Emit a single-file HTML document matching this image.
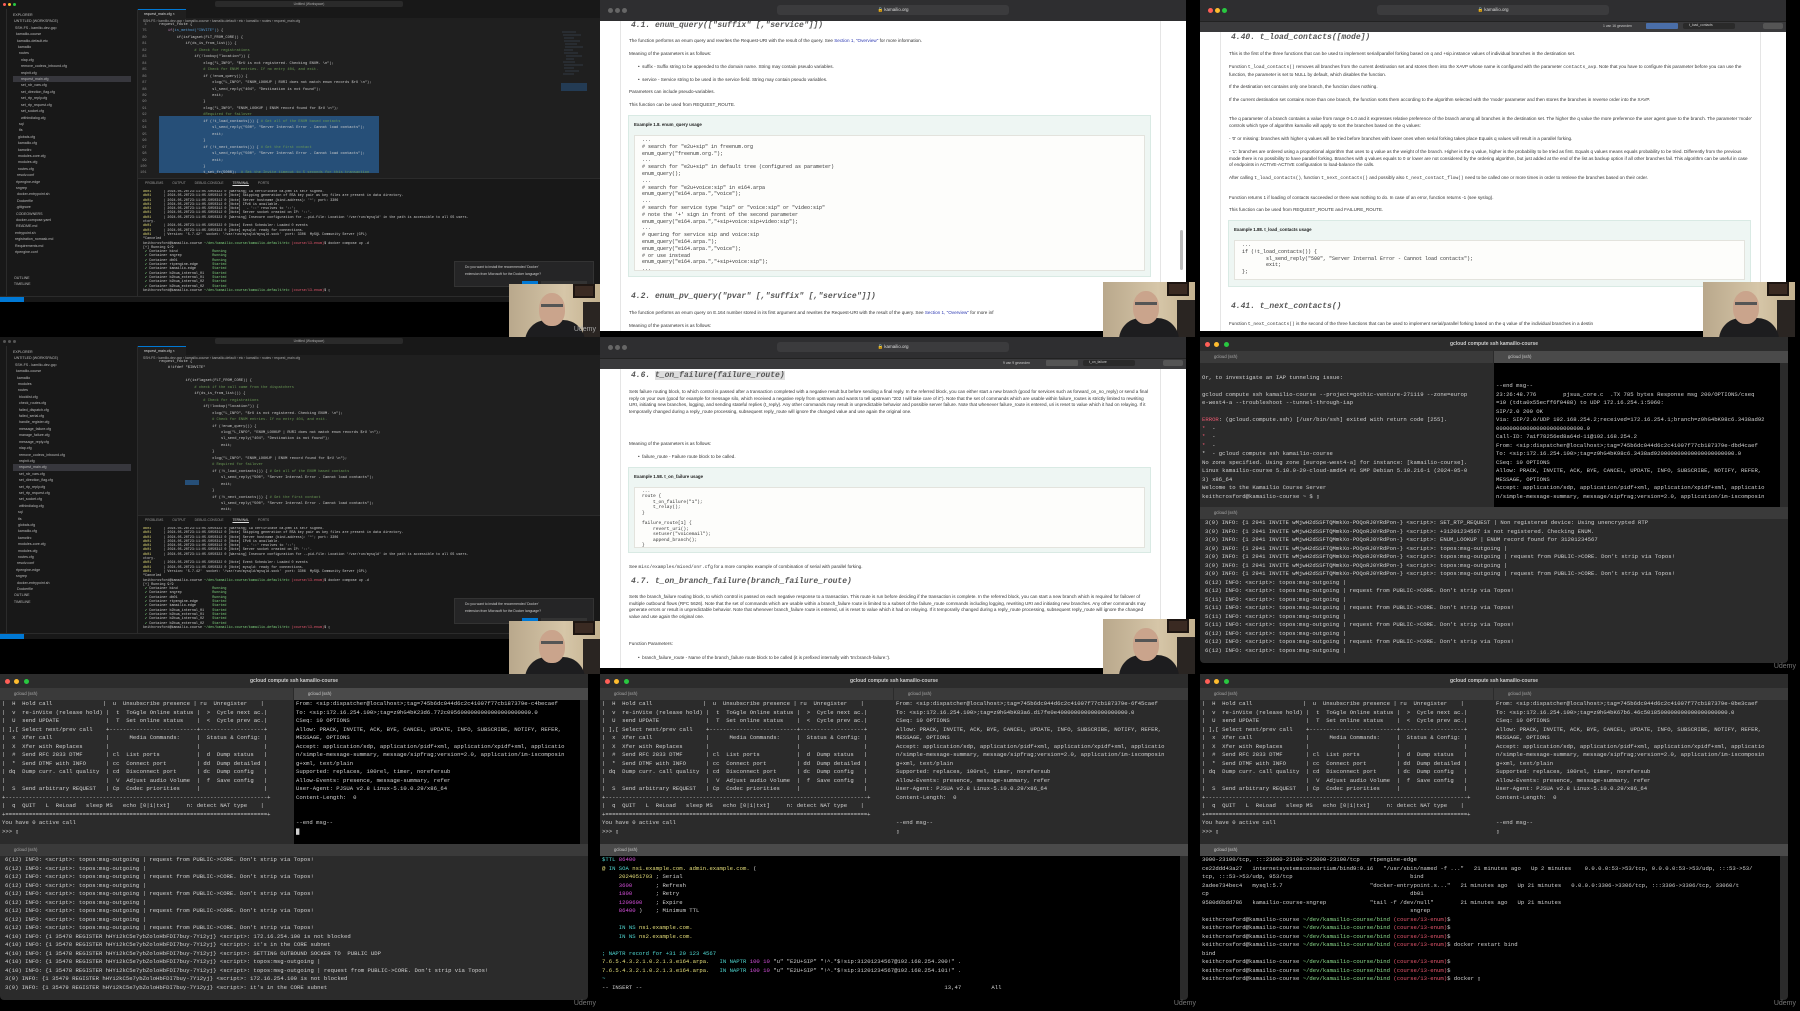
<!DOCTYPE html>
<html><head><meta charset="utf-8">
<style>
*{margin:0;padding:0;box-sizing:border-box}
body{width:1800px;height:1011px;background:#000;position:relative;overflow:hidden;font-family:"Liberation Sans",sans-serif}
.tile{position:absolute;width:600px;height:337px;overflow:hidden;background:#000}
.abs{position:absolute}
.mono{font-family:"Liberation Mono",monospace;white-space:pre}
.cam{position:absolute;width:92px;height:55px;background:linear-gradient(90deg,#b9a88c,#d6c6a8 60%,#c2b08e);overflow:hidden}
.cam .frame{position:absolute;right:6px;top:0;width:22px;height:14px;background:#3a2a22;border:2px solid #1e1612}
.cam .body{position:absolute;left:16px;top:36px;width:60px;height:30px;background:#1d1d1f;border-radius:22px 22px 0 0}
.cam .head{position:absolute;left:30px;top:9px;width:26px;height:33px;background:#caa48c;border-radius:48% 48% 45% 45%}
.cam .gl{position:absolute;left:32px;top:20px;width:22px;height:3px;background:#555}
.cam .chair{position:absolute;right:0;top:18px;width:18px;height:40px;background:#2a2522}
.udemy{position:absolute;right:4px;bottom:4px;color:#777;font-size:7px}
.vs{position:absolute;left:0;top:0;width:600px;height:302px;background:#1f1f1f;overflow:hidden}
.vs .title{position:absolute;left:0;top:0;width:600px;height:9px;background:#181818}
.vs .act{position:absolute;left:0;top:9px;width:7px;height:287px;background:#181818;border-right:1px solid #2b2b2b}
.vs .side{position:absolute;left:7px;top:9px;width:131px;height:287px;overflow:hidden;background:#181818;border-right:1px solid #2b2b2b;color:#bbb;font-size:3.6px;line-height:6.4px;padding:3px 0 0 6px;white-space:pre}
.vs .tabs{position:absolute;left:138px;top:9px;width:462px;height:9px;background:#181818}
.vs .tab{position:absolute;left:138px;top:9px;width:48px;height:9px;background:#1f1f1f;border-top:1px solid #0078d4;color:#ddd;font-size:3.6px;line-height:8px;padding-left:6px}
.vs .code{position:absolute;left:140px;top:22px;width:420px;height:155px;overflow:hidden;color:#ccc;font-size:3.7px;line-height:6.45px;font-family:"Liberation Mono",monospace;white-space:pre}
.vs .sel{position:absolute;background:#264f78}
.vs .mini{position:absolute;left:560px;top:28px;width:28px;height:80px;opacity:.6}
.vs .panel{position:absolute;left:138px;top:178px;width:462px;height:118px;border-top:1px solid #2b2b2b;background:#181818}
.vs .term{position:absolute;left:143px;top:190px;width:440px;height:104px;overflow:hidden;color:#ccc;font-size:3.4px;line-height:4.3px;font-family:"Liberation Mono",monospace;white-space:pre}
.vs .status{position:absolute;left:0;top:296px;width:600px;height:6px;background:#181818;border-top:1px solid #2b2b2b}
.vs .status b{position:absolute;left:0;top:0;width:24px;height:6px;background:#0078d4}
.vs .note{position:absolute;left:454px;top:261px;width:140px;height:26px;background:#252526;border:1px solid #333;color:#ccc;font-size:3.4px;line-height:7px;padding:2px 0 0 10px}
.br{position:absolute;left:0;top:0;width:586px;height:331px;background:#fff;overflow:hidden}
.br .bar{position:absolute;left:0;top:0;width:586px;height:21px;background:#2e2e30}
.br .url{position:absolute;left:177px;top:5px;width:232px;height:10px;background:#3b3b3d;border-radius:3px;color:#ddd;font-size:4.5px;text-align:center;line-height:10px}
.br .find{position:absolute;left:0;top:21px;width:586px;height:11px;background:#3a3a3c;border-top:1px solid #222}
.br .ml{position:absolute;left:20px;top:21px;width:1px;height:310px;background:#e5e5e5}
.br .mr{position:absolute;left:560px;top:21px;width:1px;height:310px;background:#e5e5e5}
.dot{position:absolute;width:5px;height:5px;border-radius:50%}
.doc{position:absolute;left:29px;color:#333;font-size:4.6px;line-height:6.6px;width:523px}
.h{position:absolute;left:31px;color:#555;font-family:"Liberation Mono",monospace;font-style:italic;font-weight:bold;font-size:8px}
.ex{position:absolute;left:28px;width:523px;background:#eef6f3;border:1px solid #d9eae4}
.ex .t{position:absolute;left:5px;top:6px;font-size:4.4px;font-weight:bold;color:#222}
.ex .c{position:absolute;left:5px;right:5px;background:#fdfdfb;border:1px solid #e3e3dd;font-family:"Liberation Mono",monospace;white-space:pre;font-size:5px;line-height:6.8px;color:#333;padding:1px 0 0 7px;overflow:hidden}
a{color:#2a36b1;text-decoration:none}
.tw{position:absolute;left:0;top:0;width:588px;height:326px;background:#2b2b2b;border-radius:4px}
.tw .tt{position:absolute;left:0;top:0;width:588px;height:14px;background:#2c2c2c;color:#ccc;font-size:5px;font-weight:bold;text-align:center;line-height:14px}
.tw .tb{position:absolute;height:12px;background:#3a3a3a;color:#aaa;font-size:4.3px;line-height:12px;padding-left:14px}
.tw .p{position:absolute;font-family:"Liberation Mono",monospace;white-space:pre;color:#d0d0d0;font-size:5.6px;line-height:8.5px;overflow:hidden}
.r{color:#e8576e}.y{color:#e6df7a}.m{color:#d24fd8}.c{color:#4fd6d0}.g{color:#7fd37f}.gr{color:#8ddc8d}
</style></head><body>

<!-- ============ TILE 1: VS Code ============ -->
<div class="tile" style="left:0;top:0">
 <div class="vs">
  <div class="title"></div>
  <div class="dot" style="left:3px;top:3px;width:3px;height:3px;background:#ff5f57"></div>
  <div class="dot" style="left:8px;top:3px;width:3px;height:3px;background:#febc2e"></div>
  <div class="dot" style="left:13px;top:3px;width:3px;height:3px;background:#28c840"></div>
  <div class="abs" style="left:215px;top:1px;width:188px;height:6px;background:#2a2a2a;border-radius:2px;color:#aaa;font-size:3.3px;text-align:center;line-height:6px">Untitled (Workspace)</div>
  <div class="act"></div>
  <div class="side">EXPLORER
 UNTITLED (WORKSPACE)
  SSH-FS - kamilio-dev-gcp
   kamailio-course
    kamailio-default.etc
     kamailio
      routes
        nlap.cfg
        remove_codecs_inbound.cfg
        reqinit.cfg
<span style="background:#37373d;display:inline-block;width:118px">        request_main.cfg</span>
        set_rdr_vars.cfg
        set_direction_flag.cfg
        set_rtp_reply.cfg
        set_rtp_request.cfg
        set_socket.cfg
        withindialog.cfg
      sql
      tls
     globals.cfg
     kamailio.cfg
     kamctlrc
     modules-core.cfg
     modules.cfg
     routes.cfg
    resolv.conf
   rtpengine-edge
   sngrep
    docker-entrypoint.sh
    Dockerfile
   .gitignore
   CODEOWNERS
   docker-compose.yaml
   README.md
  entrypoint.sh
  registration_nomask.md
  Requirements.md
  rtpengine.conf



 OUTLINE
 TIMELINE</div>
  <div class="tabs"></div><div class="tab">request_main.cfg ×</div>
  <div class="abs" style="left:143px;top:19px;color:#aaa;font-size:3.4px">SSH-FS › kamilio-dev-gcp › kamailio-course › kamailio-default › etc › kamailio › routes › request_main.cfg</div>
  <div class="sel" style="left:159px;top:116px;width:220px;height:57px"></div>
  <div class="code"><span style="color:#888">  4
 75
 80
 81
 82
 83
 84
 85
 86
 87
 88
 89
 90
 91
 92
 93
 94
 95
 96
 97
 98
 99
100
101
102
103
104</span></div>
  <div class="code" style="left:159px">request_route {
    <span style="color:#c586c0">if</span>(<span style="color:#569cd6">is_method("INVITE")</span>) {
        if(isflagset(FLT_FROM_CORE)) {
            if(ds_is_from_list()) {
                <span style="color:#6a9955"># Check for registrations</span>
                if(!lookup("location")) {
                    xlog("L_INFO", "$rU is not registered. Checking ENUM. \n");
                    <span style="color:#6a9955"># Check for ENUM entries. If no entry 404, and exit.</span>
                    if (!enum_query()) {
                        xlog("L_INFO", "ENUM_LOOKUP | RURI does not match enum records $rU \n");
                        sl_send_reply("404", "Destination is not found");
                        exit;
                    }
                    xlog("L_INFO", "ENUM_LOOKUP | ENUM record found for $rU \n");
                    <span style="color:#6a9955">#Required for failover</span>
                    if (!t_load_contacts()) { <span style="color:#6a9955"># Get all of the ENUM based contacts</span>
                        sl_send_reply("500", "Server Internal Error - Cannot load contacts");
                        exit;
                    }
                    if (!t_next_contacts()) { <span style="color:#6a9955"># Get the first contact</span>
                        sl_send_reply("500", "Server Internal Error - Cannot load contacts");
                        exit;
                    }
                    t_set_fr(5000);  <span style="color:#6a9955"># Set the Invite timeout to 5 seconds for this transaction</span>
                    t_on_failure("FAILED_SERVER"); <span style="color:#6a9955"># This failure route manages the failover</span>
                }
            } else {</div>
  <svg class="mini" viewBox="0 0 28 80"><g stroke="#5a7a9a" stroke-width=".6"><path d="M2 4h14M3 7h18M4 10h10M4 13h16M5 16h12M5 19h18M4 22h9M4 25h14M6 28h16M6 31h8M3 34h12M4 37h19M4 40h10M5 43h14M3 46h11"/></g><rect x="1" y="55" width="26" height="8" fill="#264f78"/></svg>
  <div class="panel"></div>
  <div class="abs" style="left:145px;top:181px;color:#999;font-size:3.3px;word-spacing:8px">PROBLEMS OUTPUT DEBUG-CONSOLE <span style="color:#ddd;text-decoration:underline">TERMINAL</span> PORTS</div>
  <div class="term"><span class="y">db01</span>      | 2024-05-20T23:11:05.5050322 0 [Warning] CA certificate ca.pem is self signed.
<span class="y">db01</span>      | 2024-05-20T23:11:05.5050312 0 [Note] Skipping generation of RSA key pair as key files are present in data directory.
<span class="y">db01</span>      | 2024-05-20T23:11:05.5050312 0 [Note] Server hostname (bind-address): '*'; port: 3306
<span class="y">db01</span>      | 2024-05-20T23:11:05.5050312 0 [Note] IPv6 is available.
<span class="y">db01</span>      | 2024-05-20T23:11:05.5050312 0 [Note]   - '::' resolves to '::';
<span class="y">db01</span>      | 2024-05-20T23:11:05.5050312 0 [Note] Server socket created on IP: '::'.
<span class="y">db01</span>      | 2024-05-20T23:11:05.5050322 0 [Warning] Insecure configuration for --pid-file: Location '/var/run/mysqld' in the path is accessible to all OS users.
ctory.
<span class="y">db01</span>      | 2024-05-20T23:11:05.5050322 0 [Note] Event Scheduler: Loaded 0 events
<span class="y">db01</span>      | 2024-05-20T23:11:05.5050322 0 [Note] mysqld: ready for connections.
<span class="y">db01</span>      | Version: '5.7.42'  socket: '/var/run/mysqld/mysqld.sock'  port: 3306  MySQL Community Server (GPL)
^Canceled
keithcrosford@kamailio-course <span class="g">~/dev/kamailio-course/kamailio-default/etc</span> <span class="r">(course/13-enum)</span>$ docker compose up -d
[+] Running 9/9
 <span class="g">✔</span> Container bind                 <span class="g">Running</span>
 <span class="g">✔</span> Container sngrep               <span class="g">Running</span>
 <span class="g">✔</span> Container db01                 <span class="g">Running</span>
 <span class="g">✔</span> Container rtpengine-edge       <span class="g">Started</span>
 <span class="g">✔</span> Container kamailio-edge        <span class="g">Started</span>
 <span class="g">✔</span> Container b2bua_internal_01    <span class="g">Started</span>
 <span class="g">✔</span> Container b2bua_external_01    <span class="g">Started</span>
 <span class="g">✔</span> Container b2bua_internal_02    <span class="g">Started</span>
 <span class="g">✔</span> Container b2bua_external_02    <span class="g">Started</span>
keithcrosford@kamailio-course <span class="g">~/dev/kamailio-course/kamailio-default/etc</span> <span class="r">(course/13-enum)</span>$ ▯</div>
  <div class="note">Do you want to install the recommended 'Docker'<br>extension from Microsoft for the Docker language?
   <div class="abs" style="left:67px;top:19px;width:16px;height:6px;background:#0078d4"></div>
   <div class="abs" style="left:86px;top:19px;width:46px;height:6px;background:#333"></div></div>
  <div class="status"><b></b></div>
 </div>
 <div class="cam" style="left:509px;top:284px;height:53px"><div class="frame"></div><div class="chair"></div><div class="body"></div><div class="head"></div><div class="gl"></div></div>
 <div class="udemy" style="color:#aaa">Udemy</div>
</div>

<!-- ============ TILE 2 ============ -->
<div class="tile" style="left:600px;top:0">
 <div class="br">
  <div class="bar"></div>
  <div class="dot" style="left:8px;top:8px;background:#666"></div><div class="dot" style="left:15px;top:8px;background:#666"></div><div class="dot" style="left:22px;top:8px;background:#666"></div>
  <div class="url">🔒 kamailio.org</div>
  <div class="ml"></div><div class="mr"></div>
  <div class="h" style="top:21px">4.1. enum_query(["suffix" [,"service"]])</div>
  <div class="doc" style="top:38px">The function performs an enum query and rewrites the Request-URI with the result of the query. See <a>Section 1, "Overview"</a> for more information.</div>
  <div class="doc" style="top:51px">Meaning of the parameters is as follows:</div>
  <div class="doc" style="top:64px;left:38px">•&nbsp; suffix - Suffix string to be appended to the domain name. String may contain pseudo variables.</div>
  <div class="doc" style="top:77px;left:38px">•&nbsp; service - Service string to be used in the service field. String may contain pseudo variables.</div>
  <div class="doc" style="top:89px">Parameters can include pseudo-variables.</div>
  <div class="doc" style="top:102px">This function can be used from REQUEST_ROUTE.</div>
  <div class="ex" style="top:115px;height:162px"><div class="t">Example 1.8. enum_query usage</div>
   <div class="c" style="top:19px;height:136px">...
# search for "e2u+sip" in freenum.org
enum_query("freenum.org.");
...
# search for "e2u+sip" in default tree (configured as parameter)
enum_query();
...
# search for "e2u+voice:sip" in e164.arpa
enum_query("e164.arpa.","voice");
...
# search for service type "sip" or "voice:sip" or "video:sip"
# note the '+' sign in front of the second parameter
enum_query("e164.arpa.","+sip+voice:sip+video:sip");
...
# quering for service sip and voice:sip
enum_query("e164.arpa.");
enum_query("e164.arpa.","voice");
# or use instead
enum_query("e164.arpa.","+sip+voice:sip");
...</div></div>
  <div class="h" style="top:292px">4.2. enum_pv_query("pvar" [,"suffix" [,"service"]])</div>
  <div class="doc" style="top:310px">The function performs an enum query on E.164 number stored in its first argument and rewrites the Request-URI with the result of the query. See <a>Section 1, "Overview"</a> for more inf</div>
  <div class="doc" style="top:323px">Meaning of the parameters is as follows:</div>
  <div class="abs" style="left:580px;top:230px;width:3px;height:40px;background:#bbb;border-radius:2px"></div>
 </div>
 <div class="cam" style="left:503px;top:282px"><div class="frame"></div><div class="chair"></div><div class="body"></div><div class="head"></div><div class="gl"></div></div>
</div>

<!-- ============ TILE 3 ============ -->
<div class="tile" style="left:1200px;top:0">
 <div class="br">
  <div class="bar"></div>
  <div class="dot" style="left:8px;top:8px;background:#ff5f57"></div><div class="dot" style="left:15px;top:8px;background:#febc2e"></div><div class="dot" style="left:22px;top:8px;background:#28c840"></div>
  <div class="url">🔒 kamailio.org</div>
  <div class="find"></div>
  <div class="abs" style="left:403px;top:24px;color:#ccc;font-size:3.4px">1 van 16 gevonden</div>
  <div class="abs" style="left:446px;top:23px;width:32px;height:6px;background:#4a6ea8;border-radius:1px"></div>
  <div class="abs" style="left:483px;top:23px;width:52px;height:6px;background:#2a2a2a;border-radius:2px;color:#ccc;font-size:3.4px;padding-left:6px">t_load_contacts</div>
  <div class="abs" style="left:563px;top:23px;width:20px;height:6px;background:#555;border-radius:2px"></div>
  <div class="ml" style="top:32px"></div><div class="mr" style="top:32px"></div>
  <div class="h" style="top:33px">4.40. t_load_contacts([mode])</div>
  <div class="doc" style="top:51px">This is the first of the three functions that can be used to implement serial/parallel forking based on q and +sip.instance values of individual branches in the destination set.</div>
  <div class="doc" style="top:64px">Function <span class="mono">t_load_contacts()</span> removes all branches from the current destination set and stores them into the XAVP whose name is configured with the parameter <span class="mono">contacts_avp</span>. Note that you have to configure this parameter before you can use the function, the parameter is set to NULL by default, which disables the function.</div>
  <div class="doc" style="top:84px">If the destination set contains only one branch, the function does nothing.</div>
  <div class="doc" style="top:97px">If the current destination set contains more than one branch, the function sorts them according to the algorithm selected with the 'mode' parameter and then stores the branches in reverse order into the XAVP.</div>
  <div class="doc" style="top:116px">The q parameter of a branch contains a value from range 0-1.0 and it expresses relative preference of the branch among all branches in the destination set. The higher the q value the more preference the user agent gave to the branch. The parameter 'mode' controls which type of algorithm kamailio will apply to sort the branches based on the q values:</div>
  <div class="doc" style="top:136px">- '0' or missing: branches with higher q values will be tried before branches with lower ones when serial forking takes place Equals q values will result in a parallel forking.</div>
  <div class="doc" style="top:149px">- '1': branches are ordered using a proportional algorithm that uses to q value as the weight of the branch. Higher is the q value, higher is the probability to be tried as first. Equals q values means equals probability to be tried. Differently from the previous mode there is no possibility to have parallel forking. Branches with q values equals to 0 or lower are not considered by the ordering algorithm, but just added at the end of the list as backup option if all other branches fail. This algorithm can be useful in case of endpoints in ACTIVE-ACTIVE configuration to load-balance the calls.</div>
  <div class="doc" style="top:175px">After calling <span class="mono">t_load_contacts()</span>, function <span class="mono">t_next_contacts()</span> and possibly also <span class="mono">t_next_contact_flow()</span> need to be called one or more times in order to retrieve the branches based on their order.</div>
  <div class="doc" style="top:195px">Function returns 1 if loading of contacts succeeded or there was nothing to do. In case of an error, function returns -1 (see syslog).</div>
  <div class="doc" style="top:207px">This function can be used from REQUEST_ROUTE and FAILURE_ROUTE.</div>
  <div class="ex" style="top:220px;height:67px"><div class="t">Example 1.88. t_load_contacts usage</div>
   <div class="c" style="top:19px;height:40px">...
if (!t_load_contacts()) {
        sl_send_reply("500", "Server Internal Error - Cannot load contacts");
        exit;
};
...</div></div>
  <div class="h" style="top:302px">4.41. t_next_contacts()</div>
  <div class="doc" style="top:321px">Function <span class="mono">t_next_contacts()</span> is the second of the three functions that can be used to implement serial/parallel forking based on the q value of the individual branches in a destin</div>
 </div>
 <div class="cam" style="left:503px;top:282px"><div class="frame"></div><div class="chair"></div><div class="body"></div><div class="head"></div><div class="gl"></div></div>
</div>

<!-- ============ TILE 4 ============ -->
<div class="tile" style="left:0;top:337px">
 <div class="vs">
  <div class="title"></div>
  <div class="dot" style="left:3px;top:3px;width:3px;height:3px;background:#555"></div>
  <div class="dot" style="left:8px;top:3px;width:3px;height:3px;background:#555"></div>
  <div class="dot" style="left:13px;top:3px;width:3px;height:3px;background:#555"></div>
  <div class="abs" style="left:215px;top:1px;width:188px;height:6px;background:#2a2a2a;border-radius:2px;color:#aaa;font-size:3.3px;text-align:center;line-height:6px">Untitled (Workspace)</div>
  <div class="act"></div>
  <div class="side">EXPLORER
 UNTITLED (WORKSPACE)
  SSH-FS - kamilio-dev-gcp
   kamailio-course
    kamailio
     modules
     routes
      blocklist.cfg
      check_routes.cfg
      failed_dispatch.cfg
      failed_serial.cfg
      handle_register.cfg
      message_failure.cfg
      manage_failure.cfg
      message_reply.cfg
      nlap.cfg
      remove_codecs_inbound.cfg
      reqinit.cfg
<span style="background:#37373d;display:inline-block;width:118px">      request_main.cfg</span>
      set_rdr_vars.cfg
      set_direction_flag.cfg
      set_rtp_reply.cfg
      set_rtp_request.cfg
      set_socket.cfg
      withindialog.cfg
     sql
     tls
     globals.cfg
     kamailio.cfg
     kamctlrc
     modules-core.cfg
     modules.cfg
     routes.cfg
    resolv.conf
   rtpengine-edge
   sngrep
    docker-entrypoint.sh
    Dockerfile
 OUTLINE
 TIMELINE</div>
  <div class="tabs"></div><div class="tab">request_main.cfg ×</div>
  <div class="abs" style="left:143px;top:19px;color:#aaa;font-size:3.4px">SSH-FS › kamilio-dev-gcp › kamailio-course › kamailio-default › etc › kamailio › routes › request_main.cfg</div>
  <div class="sel" style="left:185px;top:143px;width:14px;height:5px"></div>
  <div class="code" style="left:159px">request_route {
    #!ifdef "$INVITE"
        
            if(isflagset(FLT_FROM_CORE)) {
                <span style="color:#6a9955"># check if the call came from the dispatchers</span>
                if(ds_is_from_list()) {
                    <span style="color:#6a9955"># Check for registrations</span>
                    if(!lookup("location")) {
                        xlog("L_INFO", "$rU is not registered. Checking ENUM. \n");
                        <span style="color:#6a9955"># Check for ENUM entries. If no entry 404, and exit.</span>
                        if (!enum_query()) {
                            xlog("L_INFO", "ENUM_LOOKUP | RURI does not match enum records $rU \n");
                            sl_send_reply("404", "Destination is not found");
                            exit;
                        }
                        xlog("L_INFO", "ENUM_LOOKUP | ENUM record found for $rU \n");
                        <span style="color:#6a9955"># Required for failover</span>
                        if (!t_load_contacts()) { <span style="color:#6a9955"># Get all of the ENUM based contacts</span>
                            sl_send_reply("500", "Server Internal Error - Cannot load contacts");
                            exit;
                        }
                        if (!t_next_contacts()) { <span style="color:#6a9955"># Get the first contact</span>
                            sl_send_reply("500", "Server Internal Error - Cannot load contacts");
                            exit;
                        }
                        t_set_fr(5000);  <span style="color:#6a9955"># Set the Invite timeout to 5 seconds</span></div>
  <div class="panel"></div>
  <div class="abs" style="left:145px;top:181px;color:#999;font-size:3.3px;word-spacing:8px">PROBLEMS OUTPUT DEBUG-CONSOLE <span style="color:#ddd;text-decoration:underline">TERMINAL</span> PORTS</div>
  <div class="term"><span class="y">db01</span>      | 2024-05-20T23:11:05.5050322 0 [Warning] CA certificate ca.pem is self signed.
<span class="y">db01</span>      | 2024-05-20T23:11:05.5050312 0 [Note] Skipping generation of RSA key pair as key files are present in data directory.
<span class="y">db01</span>      | 2024-05-20T23:11:05.5050312 0 [Note] Server hostname (bind-address): '*'; port: 3306
<span class="y">db01</span>      | 2024-05-20T23:11:05.5050312 0 [Note] IPv6 is available.
<span class="y">db01</span>      | 2024-05-20T23:11:05.5050312 0 [Note]   - '::' resolves to '::';
<span class="y">db01</span>      | 2024-05-20T23:11:05.5050312 0 [Note] Server socket created on IP: '::'.
<span class="y">db01</span>      | 2024-05-20T23:11:05.5050322 0 [Warning] Insecure configuration for --pid-file: Location '/var/run/mysqld' in the path is accessible to all OS users.
ctory.
<span class="y">db01</span>      | 2024-05-20T23:11:05.5050322 0 [Note] Event Scheduler: Loaded 0 events
<span class="y">db01</span>      | 2024-05-20T23:11:05.5050322 0 [Note] mysqld: ready for connections.
<span class="y">db01</span>      | Version: '5.7.42'  socket: '/var/run/mysqld/mysqld.sock'  port: 3306  MySQL Community Server (GPL)
^Canceled
keithcrosford@kamailio-course <span class="g">~/dev/kamailio-course/kamailio-default/etc</span> <span class="r">(course/13-enum)</span>$ docker compose up -d
[+] Running 9/9
 <span class="g">✔</span> Container bind                 <span class="g">Running</span>
 <span class="g">✔</span> Container sngrep               <span class="g">Running</span>
 <span class="g">✔</span> Container db01                 <span class="g">Running</span>
 <span class="g">✔</span> Container rtpengine-edge       <span class="g">Started</span>
 <span class="g">✔</span> Container kamailio-edge        <span class="g">Started</span>
 <span class="g">✔</span> Container b2bua_internal_01    <span class="g">Started</span>
 <span class="g">✔</span> Container b2bua_external_01    <span class="g">Started</span>
 <span class="g">✔</span> Container b2bua_internal_02    <span class="g">Started</span>
 <span class="g">✔</span> Container b2bua_external_02    <span class="g">Started</span>
keithcrosford@kamailio-course <span class="g">~/dev/kamailio-course/kamailio-default/etc</span> <span class="r">(course/13-enum)</span>$ ▯</div>
  <div class="note">Do you want to install the recommended 'Docker'<br>extension from Microsoft for the Docker language?
   <div class="abs" style="left:67px;top:19px;width:16px;height:6px;background:#0078d4"></div>
   <div class="abs" style="left:86px;top:19px;width:46px;height:6px;background:#333"></div></div>
  <div class="status"><b></b></div>
 </div>
 <div class="cam" style="left:509px;top:284px;height:53px"><div class="frame"></div><div class="chair"></div><div class="body"></div><div class="head"></div><div class="gl"></div></div>
</div>

<!-- ============ TILE 5 ============ -->
<div class="tile" style="left:600px;top:337px">
 <div class="br">
  <div class="bar"></div>
  <div class="dot" style="left:8px;top:8px;background:#666"></div><div class="dot" style="left:15px;top:8px;background:#666"></div><div class="dot" style="left:22px;top:8px;background:#666"></div>
  <div class="url">🔒 kamailio.org</div>
  <div class="find"></div>
  <div class="abs" style="left:403px;top:24px;color:#ccc;font-size:3.4px">9 van 9 gevonden</div>
  <div class="abs" style="left:446px;top:23px;width:32px;height:6px;background:#555;border-radius:1px"></div>
  <div class="abs" style="left:483px;top:23px;width:52px;height:6px;background:#2a2a2a;border-radius:2px;color:#ccc;font-size:3.4px;padding-left:6px">t_on_failure</div>
  <div class="abs" style="left:563px;top:23px;width:20px;height:6px;background:#555;border-radius:2px"></div>
  <div class="ml" style="top:32px"></div><div class="mr" style="top:32px"></div>
  <div class="h" style="top:34px">4.6. <span style="background:#ddd">t_on_failure(failure_route)</span></div>
  <div class="doc" style="top:52px">Sets failure routing block, to which control is passed after a transaction completed with a negative result but before sending a final reply. In the referred block, you can either start a new branch (good for services such as forward_on_no_reply) or send a final reply on your own (good for example for message silo, which received a negative reply from upstream and wants to tell upstream "202 I will take care of it"). Note that the set of commands which are usable within failure_routes is strictly limited to rewriting URI, initiating new branches, logging, and sending stateful replies (t_reply). Any other commands may result in unpredictable behavior and possible server failure. Note that whenever failure_route is entered, uri is reset to value which it had on relaying. If it temporarily changed during a reply_route processing, subsequent reply_route will ignore the changed value and use again the original one.</div>
  <div class="doc" style="top:104px">Meaning of the parameters is as follows:</div>
  <div class="doc" style="top:117px;left:38px">•&nbsp; failure_route - Failure route block to be called.</div>
  <div class="ex" style="top:130px;height:86px"><div class="t">Example 1.58. t_on_failure usage</div>
   <div class="c" style="top:19px;height:61px;font-size:4.6px;line-height:5.4px">...
route {
    t_on_failure("1");
    t_relay();
}

failure_route[1] {
    revert_uri();
    setuser("voicemail");
    append_branch();
}
...</div></div>
  <div class="doc" style="top:227px">See <span class="mono">misc/examples/mixed/onr.cfg</span> for a more complex example of combination of serial with parallel forking.</div>
  <div class="h" style="top:240px">4.7. t_on_branch_failure(branch_failure_route)</div>
  <div class="doc" style="top:257px">Sets the branch_failure routing block, to which control is passed on each negative response to a transaction. This route is run before deciding if the transaction is complete. In the referred block, you can start a new branch which is required for failover of multiple outbound flows (RFC 5626). Note that the set of commands which are usable within a branch_failure route is limited to a subset of the failure_route commands including logging, rewriting URI and initiating new branches. Any other commands may generate errors or result in unpredictable behavior. Note that whenever branch_failure route is entered, uri is reset to value which it had on relaying. If it temporarily changed during a reply_route processing, subsequent reply_route will ignore the changed value and use again the original one.</div>
  <div class="doc" style="top:304px">Function Parameters:</div>
  <div class="doc" style="top:318px;left:38px">•&nbsp; branch_failure_route - Name of the branch_failure route block to be called (it is prefixed internally with 'tm:branch-failure:').</div>
 </div>
 <div class="cam" style="left:503px;top:282px"><div class="frame"></div><div class="chair"></div><div class="body"></div><div class="head"></div><div class="gl"></div></div>
</div>

<!-- ============ TILE 6 ============ -->
<div class="tile" style="left:1200px;top:337px">
 <div class="tw">
  <div class="tt">gcloud compute ssh kamailio-course</div>
  <div class="dot" style="left:5px;top:5px;background:#ff5f57"></div><div class="dot" style="left:14px;top:5px;background:#febc2e"></div><div class="dot" style="left:24px;top:5px;background:#28c840"></div>
  <div class="tb" style="left:0;top:14px;width:293px">gcloud (ssh)</div>
  <div class="tb" style="left:294px;top:14px;width:294px;background:#4a4a4a;color:#ccc">gcloud (ssh)</div>
  <div class="p" style="left:2px;top:28px;width:288px;height:142px">
Or, to investigate an IAP tunneling issue:

gcloud compute ssh kamailio-course --project=gothic-venture-271119 --zone=europ
e-west4-a --troubleshoot --tunnel-through-iap

<span class="r">ERROR</span>: (gcloud.compute.ssh) [/usr/bin/ssh] exited with return code [255].
<span class="r">*</span>  -
<span class="r">*</span>  -
<span class="r">*</span>  -
*  - gcloud compute ssh kamailio-course
No zone specified. Using zone [europe-west4-a] for instance: [kamailio-course].
Linux kamailio-course 5.10.0-29-cloud-amd64 #1 SMP Debian 5.10.216-1 (2024-05-0
3) x86_64
Welcome to the Kamailio Course Server
keithcrosford@kamailio-course ~ $ ▯</div>
  <div class="abs" style="left:294px;top:26px;width:286px;height:144px;background:#000"></div>
  <div class="p" style="left:296px;top:28px;width:284px;height:142px">

--end msg--
23:26:48.776        pjsua_core.c  .TX 785 bytes Response msg 200/OPTIONS/cseq
=10 (tdta0x55ecff6f0488) to UDP 172.16.254.1:5060:
SIP/2.0 200 OK
Via: SIP/2.0/UDP 192.168.254.2;received=172.16.254.1;branch=z9hG4bK98c6.3438ad92
00000000000000000000000000.0
Call-ID: 7a1f78256ed8a64d-11@192.168.254.2
From: &lt;sip:dispatcher@localhost&gt;;tag=745b6dc044d6c2c41007f77cb187379e-dbd4caef
To: &lt;sip:172.16.254.100&gt;;tag=z9hG4bK98c6.3438ad920000000000000000000000.0
CSeq: 10 OPTIONS
Allow: PRACK, INVITE, ACK, BYE, CANCEL, UPDATE, INFO, SUBSCRIBE, NOTIFY, REFER,
MESSAGE, OPTIONS
Accept: application/sdp, application/pidf+xml, application/xpidf+xml, applicatio
n/simple-message-summary, message/sipfrag;version=2.0, application/im-iscomposin</div>
  <div class="tb" style="left:0;top:170px;width:588px">gcloud (ssh)</div>
  <div class="p" style="left:5px;top:182px;width:575px;height:140px">3(9) INFO: {1 2941 INVITE wMjwH2dSSFTQMmkXo-POQoRJ0YRdPon-} &lt;script&gt;: SET_RTP_REQUEST | Non registered device: Using unencrypted RTP
3(9) INFO: {1 2941 INVITE wMjwH2dSSFTQMmkXo-POQoRJ0YRdPon-} &lt;script&gt;: +31201234567 is not registered. Checking ENUM.
3(9) INFO: {1 2941 INVITE wMjwH2dSSFTQMmkXo-POQoRJ0YRdPon-} &lt;script&gt;: ENUM_LOOKUP | ENUM record found for 31201234567
3(9) INFO: {1 2941 INVITE wMjwH2dSSFTQMmkXo-POQoRJ0YRdPon-} &lt;script&gt;: topos:msg-outgoing |
3(9) INFO: {1 2941 INVITE wMjwH2dSSFTQMmkXo-POQoRJ0YRdPon-} &lt;script&gt;: topos:msg-outgoing | request from PUBLIC-&gt;CORE. Don't strip via Topos!
3(9) INFO: {1 2941 INVITE wMjwH2dSSFTQMmkXo-POQoRJ0YRdPon-} &lt;script&gt;: topos:msg-outgoing |
3(9) INFO: {1 2941 INVITE wMjwH2dSSFTQMmkXo-POQoRJ0YRdPon-} &lt;script&gt;: topos:msg-outgoing | request from PUBLIC-&gt;CORE. Don't strip via Topos!
6(12) INFO: &lt;script&gt;: topos:msg-outgoing |
6(12) INFO: &lt;script&gt;: topos:msg-outgoing | request from PUBLIC-&gt;CORE. Don't strip via Topos!
5(11) INFO: &lt;script&gt;: topos:msg-outgoing |
5(11) INFO: &lt;script&gt;: topos:msg-outgoing | request from PUBLIC-&gt;CORE. Don't strip via Topos!
5(11) INFO: &lt;script&gt;: topos:msg-outgoing |
5(11) INFO: &lt;script&gt;: topos:msg-outgoing | request from PUBLIC-&gt;CORE. Don't strip via Topos!
6(12) INFO: &lt;script&gt;: topos:msg-outgoing |
6(12) INFO: &lt;script&gt;: topos:msg-outgoing | request from PUBLIC-&gt;CORE. Don't strip via Topos!
6(12) INFO: &lt;script&gt;: topos:msg-outgoing |</div>
 </div>
 <div class="udemy">Udemy</div>
</div>

<!-- ============ TILE 7 ============ -->
<div class="tile" style="left:0;top:674px">
 <div class="tw">
  <div class="tt">gcloud compute ssh kamailio-course</div>
  <div class="dot" style="left:5px;top:5px;background:#ff5f57"></div><div class="dot" style="left:14px;top:5px;background:#febc2e"></div><div class="dot" style="left:24px;top:5px;background:#28c840"></div>
  <div class="tb" style="left:0;top:14px;width:293px">gcloud (ssh)</div>
  <div class="tb" style="left:294px;top:14px;width:294px;background:#4a4a4a;color:#ccc">gcloud (ssh)</div>
  <div class="p" style="left:2px;top:26px;width:288px;height:144px">|  H  Hold call               |  u  Unsubscribe presence | ru  Unregister    |
|  v  re-inVite (release hold) |  t  ToGgle Online status |  &gt;  Cycle next ac.|
|  U  send UPDATE              |  T  Set online status    |  &lt;  Cycle prev ac.|
| ],[ Select next/prev call    +--------------------------+-------------------+
|  x  Xfer call                |      Media Commands:     |  Status &amp; Config: |
|  X  Xfer with Replaces       |                          |                   |
|  #  Send RFC 2833 DTMF       | cl  List ports           |  d  Dump status   |
|  *  Send DTMF with INFO      | cc  Connect port         | dd  Dump detailed |
| dq  Dump curr. call quality  | cd  Disconnect port      | dc  Dump config   |
|                              |  V  Adjust audio Volume  |  f  Save config   |
|  S  Send arbitrary REQUEST   | Cp  Codec priorities     |                   |
+------------------------------------------------------------------------------+
|  q  QUIT   L  ReLoad   sleep MS   echo [0|1|txt]     n: detect NAT type    |
+==============================================================================+
You have 0 active call
&gt;&gt;&gt; ▯</div>
  <div class="abs" style="left:294px;top:26px;width:286px;height:144px;background:#000"></div>
  <div class="p" style="left:296px;top:26px;width:284px;height:142px">From: &lt;sip:dispatcher@localhost&gt;;tag=745b6dc044d6c2c41007f77cb187379e-c4becaef
To: &lt;sip:172.16.254.100&gt;;tag=z9hG4bK23d6.772c0956000000000000000000000.0
CSeq: 10 OPTIONS
Allow: PRACK, INVITE, ACK, BYE, CANCEL, UPDATE, INFO, SUBSCRIBE, NOTIFY, REFER,
MESSAGE, OPTIONS
Accept: application/sdp, application/pidf+xml, application/xpidf+xml, applicatio
n/simple-message-summary, message/sipfrag;version=2.0, application/im-iscomposin
g+xml, text/plain
Supported: replaces, 100rel, timer, norefersub
Allow-Events: presence, message-summary, refer
User-Agent: PJSUA v2.8 Linux-5.10.0.29/x86_64
Content-Length:  0


--end msg--
█</div>
  <div class="tb" style="left:0;top:170px;width:588px">gcloud (ssh)</div>
  <div class="p" style="left:5px;top:182px;width:575px;height:140px">6(12) INFO: &lt;script&gt;: topos:msg-outgoing | request from PUBLIC-&gt;CORE. Don't strip via Topos!
6(12) INFO: &lt;script&gt;: topos:msg-outgoing |
6(12) INFO: &lt;script&gt;: topos:msg-outgoing | request from PUBLIC-&gt;CORE. Don't strip via Topos!
6(12) INFO: &lt;script&gt;: topos:msg-outgoing |
6(12) INFO: &lt;script&gt;: topos:msg-outgoing | request from PUBLIC-&gt;CORE. Don't strip via Topos!
6(12) INFO: &lt;script&gt;: topos:msg-outgoing |
6(12) INFO: &lt;script&gt;: topos:msg-outgoing | request from PUBLIC-&gt;CORE. Don't strip via Topos!
6(12) INFO: &lt;script&gt;: topos:msg-outgoing |
6(12) INFO: &lt;script&gt;: topos:msg-outgoing | request from PUBLIC-&gt;CORE. Don't strip via Topos!
4(10) INFO: {1 35478 REGISTER hHYi2kC5e7ybZoloHbFDI7buy-7Y12yj} &lt;script&gt;: 172.16.254.100 is not blocked
4(10) INFO: {1 35478 REGISTER hHYi2kC5e7ybZoloHbFDI7buy-7Y12yj} &lt;script&gt;: it's in the CORE subnet
4(10) INFO: {1 35478 REGISTER hHYi2kC5e7ybZoloHbFDI7buy-7Y12yj} &lt;script&gt;: SETTING OUTBOUND SOCKER TO  PUBLIC UDP
4(10) INFO: {1 35478 REGISTER hHYi2kC5e7ybZoloHbFDI7buy-7Y12yj} &lt;script&gt;: topos:msg-outgoing |
4(10) INFO: {1 35478 REGISTER hHYi2kC5e7ybZoloHbFDI7buy-7Y12yj} &lt;script&gt;: topos:msg-outgoing | request from PUBLIC-&gt;CORE. Don't strip via Topos!
3(9) INFO: {1 35479 REGISTER hHYi2kC5e7ybZoloHbFDI7buy-7Y12yj} &lt;script&gt;: 172.16.254.100 is not blocked
3(9) INFO: {1 35479 REGISTER hHYi2kC5e7ybZoloHbFDI7buy-7Y12yj} &lt;script&gt;: it's in the CORE subnet</div>
 </div>
 <div class="udemy">Udemy</div>
</div>

<!-- ============ TILE 8 ============ -->
<div class="tile" style="left:600px;top:674px">
 <div class="tw">
  <div class="tt">gcloud compute ssh kamailio-course</div>
  <div class="dot" style="left:5px;top:5px;background:#ff5f57"></div><div class="dot" style="left:14px;top:5px;background:#febc2e"></div><div class="dot" style="left:24px;top:5px;background:#28c840"></div>
  <div class="tb" style="left:0;top:14px;width:293px">gcloud (ssh)</div>
  <div class="tb" style="left:294px;top:14px;width:294px">gcloud (ssh)</div>
  <div class="p" style="left:2px;top:26px;width:288px;height:144px">|  H  Hold call               |  u  Unsubscribe presence | ru  Unregister    |
|  v  re-inVite (release hold) |  t  ToGgle Online status |  &gt;  Cycle next ac.|
|  U  send UPDATE              |  T  Set online status    |  &lt;  Cycle prev ac.|
| ],[ Select next/prev call    +--------------------------+-------------------+
|  x  Xfer call                |      Media Commands:     |  Status &amp; Config: |
|  X  Xfer with Replaces       |                          |                   |
|  #  Send RFC 2833 DTMF       | cl  List ports           |  d  Dump status   |
|  *  Send DTMF with INFO      | cc  Connect port         | dd  Dump detailed |
| dq  Dump curr. call quality  | cd  Disconnect port      | dc  Dump config   |
|                              |  V  Adjust audio Volume  |  f  Save config   |
|  S  Send arbitrary REQUEST   | Cp  Codec priorities     |                   |
+------------------------------------------------------------------------------+
|  q  QUIT   L  ReLoad   sleep MS   echo [0|1|txt]     n: detect NAT type    |
+==============================================================================+
You have 0 active call
&gt;&gt;&gt; ▯</div>
  <div class="p" style="left:296px;top:26px;width:284px;height:142px">From: &lt;sip:dispatcher@localhost&gt;;tag=745b6dc044d6c2c41007f77cb187379e-6f45caef
To: &lt;sip:172.16.254.100&gt;;tag=z9hG4bK83a6.d17fe0e400000000000000000000.0
CSeq: 10 OPTIONS
Allow: PRACK, INVITE, ACK, BYE, CANCEL, UPDATE, INFO, SUBSCRIBE, NOTIFY, REFER,
MESSAGE, OPTIONS
Accept: application/sdp, application/pidf+xml, application/xpidf+xml, applicatio
n/simple-message-summary, message/sipfrag;version=2.0, application/im-iscomposin
g+xml, text/plain
Supported: replaces, 100rel, timer, norefersub
Allow-Events: presence, message-summary, refer
User-Agent: PJSUA v2.8 Linux-5.10.0.29/x86_64
Content-Length:  0


--end msg--
▯</div>
  <div class="tb" style="left:0;top:170px;width:588px;background:#4a4a4a;color:#ccc">gcloud (ssh)</div>
  <div class="abs" style="left:0;top:182px;width:580px;height:144px;background:#000"></div>
  <div class="p" style="left:2px;top:182px;width:575px;height:140px"><span class="c">$TTL</span> <span class="m">86400</span>
<span class="y">@</span> <span class="c">IN SOA</span> <span class="y">ns1.example.com. admin.example.com.</span> (
     <span class="y">2024051703</span> ; Serial
     <span class="m">3600</span>       ; Refresh
     <span class="m">1800</span>       ; Retry
     <span class="m">1209600</span>    ; Expire
     <span class="m">86400</span> )    ; Minimum TTL

     <span class="c">IN NS</span> <span class="y">ns1.example.com.</span>
     <span class="c">IN NS</span> <span class="y">ns2.example.com.</span>

<span class="c">; NAPTR record for +31 20 123 4567</span>
<span class="y">7.6.5.4.3.2.1.0.2.1.3.e164.arpa.</span>   <span class="c">IN NAPTR</span> <span class="m">100 10</span> "u" "E2U+SIP" "!^.*$!sip:31201234567@192.168.254.200!" .
<span class="y">7.6.5.4.3.2.1.0.2.1.3.e164.arpa.</span>   <span class="c">IN NAPTR</span> <span class="m">100 10</span> "u" "E2U+SIP" "!^.*$!sip:31201234567@192.168.254.101!" .
<span class="c">~</span>
-- INSERT --                                                                                          13,47         All</div>
 </div>
 <div class="udemy">Udemy</div>
</div>

<!-- ============ TILE 9 ============ -->
<div class="tile" style="left:1200px;top:674px">
 <div class="tw">
  <div class="tt">gcloud compute ssh kamailio-course</div>
  <div class="dot" style="left:5px;top:5px;background:#ff5f57"></div><div class="dot" style="left:14px;top:5px;background:#febc2e"></div><div class="dot" style="left:24px;top:5px;background:#28c840"></div>
  <div class="tb" style="left:0;top:14px;width:293px">gcloud (ssh)</div>
  <div class="tb" style="left:294px;top:14px;width:294px">gcloud (ssh)</div>
  <div class="p" style="left:2px;top:26px;width:288px;height:144px">|  H  Hold call               |  u  Unsubscribe presence | ru  Unregister    |
|  v  re-inVite (release hold) |  t  ToGgle Online status |  &gt;  Cycle next ac.|
|  U  send UPDATE              |  T  Set online status    |  &lt;  Cycle prev ac.|
| ],[ Select next/prev call    +--------------------------+-------------------+
|  x  Xfer call                |      Media Commands:     |  Status &amp; Config: |
|  X  Xfer with Replaces       |                          |                   |
|  #  Send RFC 2833 DTMF       | cl  List ports           |  d  Dump status   |
|  *  Send DTMF with INFO      | cc  Connect port         | dd  Dump detailed |
| dq  Dump curr. call quality  | cd  Disconnect port      | dc  Dump config   |
|                              |  V  Adjust audio Volume  |  f  Save config   |
|  S  Send arbitrary REQUEST   | Cp  Codec priorities     |                   |
+------------------------------------------------------------------------------+
|  q  QUIT   L  ReLoad   sleep MS   echo [0|1|txt]     n: detect NAT type    |
+==============================================================================+
You have 0 active call
&gt;&gt;&gt; ▯</div>
  <div class="p" style="left:296px;top:26px;width:284px;height:142px">From: &lt;sip:dispatcher@localhost&gt;;tag=745b6dc044d6c2c41007f77cb187379e-0be3caef
To: &lt;sip:172.16.254.100&gt;;tag=z9hG4bK67b6.46c5018500000000000000000000.0
CSeq: 10 OPTIONS
Allow: PRACK, INVITE, ACK, BYE, CANCEL, UPDATE, INFO, SUBSCRIBE, NOTIFY, REFER,
MESSAGE, OPTIONS
Accept: application/sdp, application/pidf+xml, application/xpidf+xml, applicatio
n/simple-message-summary, message/sipfrag;version=2.0, application/im-iscomposin
g+xml, text/plain
Supported: replaces, 100rel, timer, norefersub
Allow-Events: presence, message-summary, refer
User-Agent: PJSUA v2.8 Linux-5.10.0.29/x86_64
Content-Length:  0


--end msg--
▯</div>
  <div class="tb" style="left:0;top:170px;width:588px;background:#4a4a4a;color:#ccc">gcloud (ssh)</div>
  <div class="abs" style="left:0;top:182px;width:580px;height:144px;background:#000"></div>
  <div class="p" style="left:2px;top:182px;width:575px;height:140px">3000-23100/tcp, :::23000-23100-&gt;23000-23100/tcp   rtpengine-edge
ce22ddd43a27   internetsystemsconsortium/bind9:9.16   "/usr/sbin/named -f ..."   21 minutes ago   Up 2 minutes    0.0.0.0:53-&gt;53/tcp, 0.0.0.0:53-&gt;53/udp, :::53-&gt;53/
tcp, :::53-&gt;53/udp, 953/tcp                                   bind
2adee734bec4   mysql:5.7                          "docker-entrypoint.s..."   21 minutes ago   Up 21 minutes   0.0.0.0:3306-&gt;3306/tcp, :::3306-&gt;3306/tcp, 33060/t
cp                                                            db01
9580d6bdd786   kamailio-course-sngrep             "tail -f /dev/null"        21 minutes ago   Up 21 minutes
                                                              sngrep
keithcrosford@kamailio-course <span class="gr">~/dev/kamailio-course/bind</span> <span class="r">(course/13-enum)</span>$
keithcrosford@kamailio-course <span class="gr">~/dev/kamailio-course/bind</span> <span class="r">(course/13-enum)</span>$
keithcrosford@kamailio-course <span class="gr">~/dev/kamailio-course/bind</span> <span class="r">(course/13-enum)</span>$
keithcrosford@kamailio-course <span class="gr">~/dev/kamailio-course/bind</span> <span class="r">(course/13-enum)</span>$ docker restart bind
bind
keithcrosford@kamailio-course <span class="gr">~/dev/kamailio-course/bind</span> <span class="r">(course/13-enum)</span>$
keithcrosford@kamailio-course <span class="gr">~/dev/kamailio-course/bind</span> <span class="r">(course/13-enum)</span>$
keithcrosford@kamailio-course <span class="gr">~/dev/kamailio-course/bind</span> <span class="r">(course/13-enum)</span>$ docker ▯</div>
 </div>
 <div class="udemy">Udemy</div>
</div>

</body></html>
